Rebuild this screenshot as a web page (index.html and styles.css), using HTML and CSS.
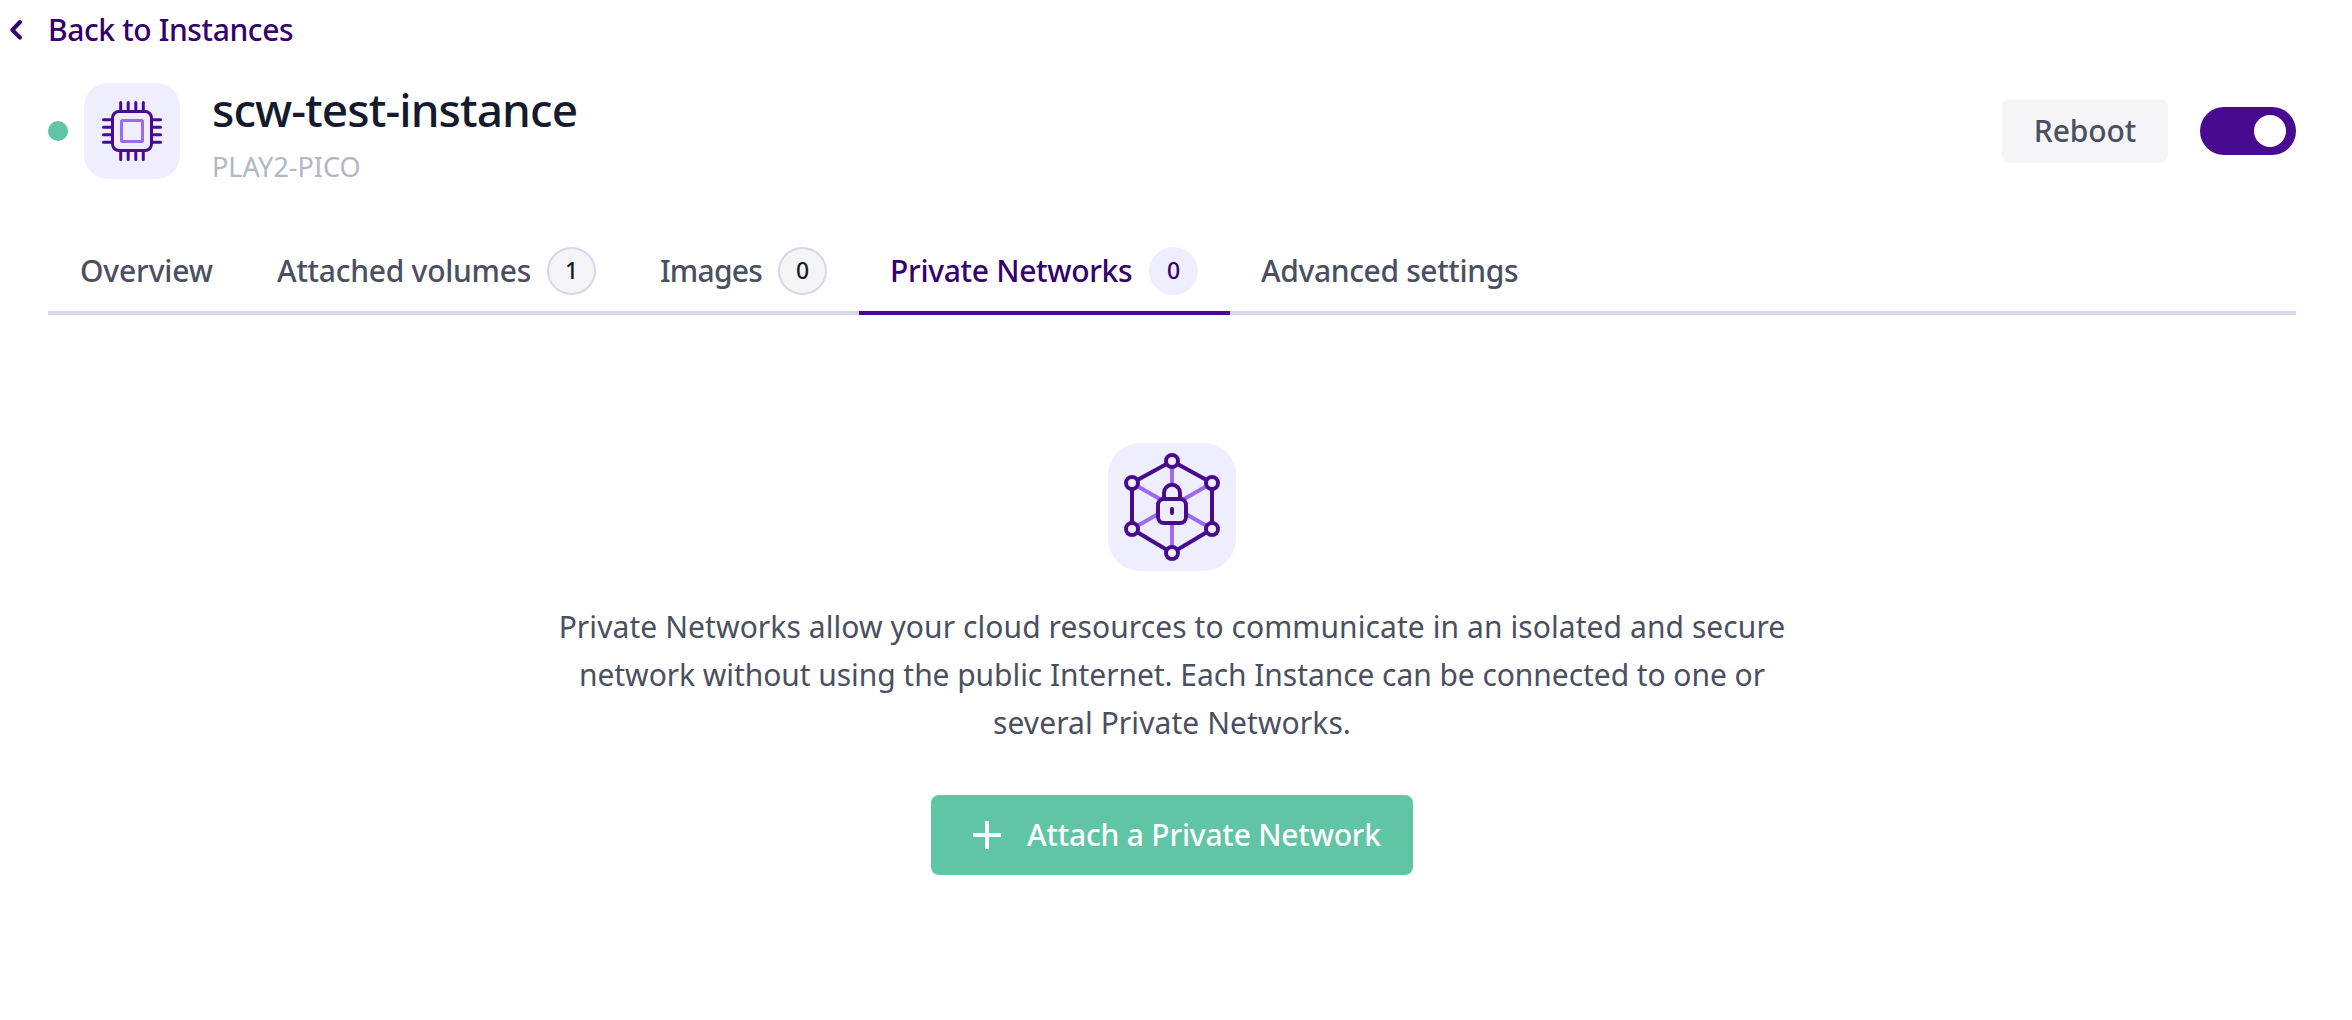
FILE: index.html
```
<!DOCTYPE html>
<html lang="en">
<head>
<meta charset="utf-8">
<title>scw-test-instance</title>
<link rel="stylesheet" href="styles.css">
</head>
<body>
<a class="back">
  <svg class="back-icon" width="16" height="24" viewBox="0 0 16 24" fill="none" stroke="currentColor" stroke-width="4" stroke-linecap="round" stroke-linejoin="round"><path d="M12 4 4.300 12 12 19.700"/></svg>
  <span class="back-text">Back to Instances</span>
</a>

<header class="header">
  <span class="status"></span>
  <svg class="product" width="96" height="96" viewBox="0 0 96 96" fill="none" stroke-width="3" stroke-linecap="round">
    <rect width="96" height="96" rx="24" fill="#efeeff"/>
    <g stroke="#480b90">
      <rect x="28.5" y="28.5" width="39" height="39" rx="6.5"/>
      <path d="M36.7 19.5V27M44.2 19.5V27M51.8 19.5V27M59.3 19.5V27M36.7 69v7.5M44.2 69v7.5M51.8 69v7.5M59.3 69v7.5M19.5 36.7H27M19.5 44.2H27M19.5 51.8H27M19.5 59.3H27M69 36.7h7.5M69 44.2h7.5M69 51.8h7.5M69 59.3h7.5"/>
    </g>
    <rect x="37.5" y="37.5" width="21" height="21" rx="1.2" stroke="#9c6af2"/>
  </svg>
  <div class="titles">
    <h1 class="title">scw-test-instance</h1>
    <p class="subtitle">PLAY2-PICO</p>
  </div>
  <button class="reboot">Reboot</button>
  <span class="toggle"><span class="knob"></span></span>
</header>

<nav class="tabs">
  <a class="tab overview">Overview</a>
  <a class="tab volumes"><span>Attached volumes</span><span class="badge">1</span></a>
  <a class="tab images"><span>Images</span><span class="badge">0</span></a>
  <a class="tab active"><span>Private Networks</span><span class="badge">0</span></a>
  <a class="tab advanced">Advanced settings</a>
</nav>

<main class="empty">
  <svg width="128" height="128" viewBox="0 0 128 128" fill="none" stroke-width="4">
    <rect width="128" height="128" rx="32" fill="#efeeff"/>
    <path stroke="#9c6af2" d="M64 18v92M24 40l80 46M104 40 24 86"/>
    <path stroke="#480b90" d="m64 18 40 22v46l-40 24-40-24V40z"/>
    <g stroke="#480b90" fill="#efeeff">
      <circle cx="64" cy="18" r="6"/><circle cx="104" cy="40" r="6"/><circle cx="104" cy="86" r="6"/>
      <circle cx="64" cy="110" r="6"/><circle cx="24" cy="86" r="6"/><circle cx="24" cy="40" r="6"/>
      <path d="M56 57V49.700a8 8 0 0 1 16 0V57"/>
      <rect x="50" y="56" width="28" height="24" rx="6"/>
    </g>
    <rect x="62" y="64" width="4" height="8" rx="2" fill="#480b90"/>
  </svg>
  <p class="message">Private Networks allow your cloud resources to communicate in an isolated and secure<br><span class="tight">network without using the public Internet. Each Instance can be connected to one or</span><br>several Private Networks.</p>
  <button class="attach">
    <svg width="28" height="28" viewBox="0 0 28 28" fill="none" stroke="currentColor" stroke-width="4"><path d="M14 0v28M0 14h28"/></svg>
    <span>Attach a Private Network</span>
  </button>
</main>
</body>
</html>
```
FILE: styles.css
```
* { box-sizing: border-box; }
body {
  margin: 0;
  background: #fff;
  color: #4a4f62;
  font: 400 30px/48px "Noto Sans", sans-serif;
}
h1, p { margin: 0; }
button { border: 0; font: inherit; }

.back {
  display: flex;
  align-items: center;
  gap: 24px;
  height: 60px;
  padding-left: 8px;
  color: #34006d;
  font-weight: 500;
}
.back-text { letter-spacing: -0.38px; }

.header {
  display: flex;
  align-items: center;
  height: 96px;
  margin: 23px 56px 0 48px;
}
.status {
  width: 20px;
  height: 20px;
  border-radius: 50%;
  background: #60c5a5;
}
.product { margin: 0 32px 0 16px; }
.titles { flex: 1; padding-top: 6px; }
.title {
  color: #151a2d;
  font-size: 46px;
  font-weight: 500;
  line-height: 56px;
  letter-spacing: -0.93px;
}
.subtitle {
  color: #b3b6c4;
  font-size: 27px;
  line-height: 40px;
  padding-top: 10px;
}
.reboot {
  width: 166px;
  height: 64px;
  border-radius: 8px;
  background: #f5f5f8;
  color: #4a4f62;
  font-weight: 500;
  letter-spacing: -0.1px;
}
.toggle {
  display: flex;
  justify-content: flex-end;
  width: 96px;
  height: 48px;
  margin-left: 32px;
  padding: 8px 10px;
  border-radius: 24px;
  background: #480b90;
}
.knob {
  width: 32px;
  height: 32px;
  border-radius: 50%;
  background: #fff;
}

.tabs {
  display: flex;
  height: 88px;
  margin: 48px 56px 0 48px;
  box-shadow: inset 0 -4px #d5d8e6;
}
.tab {
  display: flex;
  align-items: center;
  justify-content: space-between;
  padding: 4px 32px 0;
  border-bottom: 4px solid transparent;
  font-weight: 500;
  white-space: nowrap;
}
.overview { width: 197px; letter-spacing: -0.15px; }
.volumes { width: 383px; letter-spacing: -0.26px; }
.images { width: 231px; letter-spacing: -0.75px; }
.active {
  width: 371px;
  padding-left: 31px;
  border-color: #480b90;
  color: #34006d;
  letter-spacing: -0.3px;
}
.advanced { padding-left: 31px; letter-spacing: -0.36px; }
.badge {
  display: grid;
  place-items: center;
  width: 49px;
  height: 48px;
  padding-bottom: 2px;
  border: 2px solid #d5d8e6;
  border-radius: 50%;
  background: #f5f5f8;
  color: #151a2d;
  font-size: 23px;
  line-height: 42px;
  letter-spacing: 0;
}
.active .badge {
  border-color: #efeeff;
  background: #efeeff;
  color: #34006d;
}

.empty {
  display: flex;
  flex-direction: column;
  align-items: center;
  margin-right: 8px;
  padding-top: 128px;
}
.message {
  padding-top: 32px;
  text-align: center;
  letter-spacing: 0.08px;
}
.tight { letter-spacing: -0.06px; }
.attach {
  display: flex;
  align-items: center;
  gap: 26px;
  width: 482px;
  height: 80px;
  margin-top: 48px;
  padding: 0 0 0 42px;
  border-radius: 8px;
  background: #60c5a5;
  color: #fff;
  font-weight: 500;
  letter-spacing: -0.2px;
  white-space: nowrap;
}
```
